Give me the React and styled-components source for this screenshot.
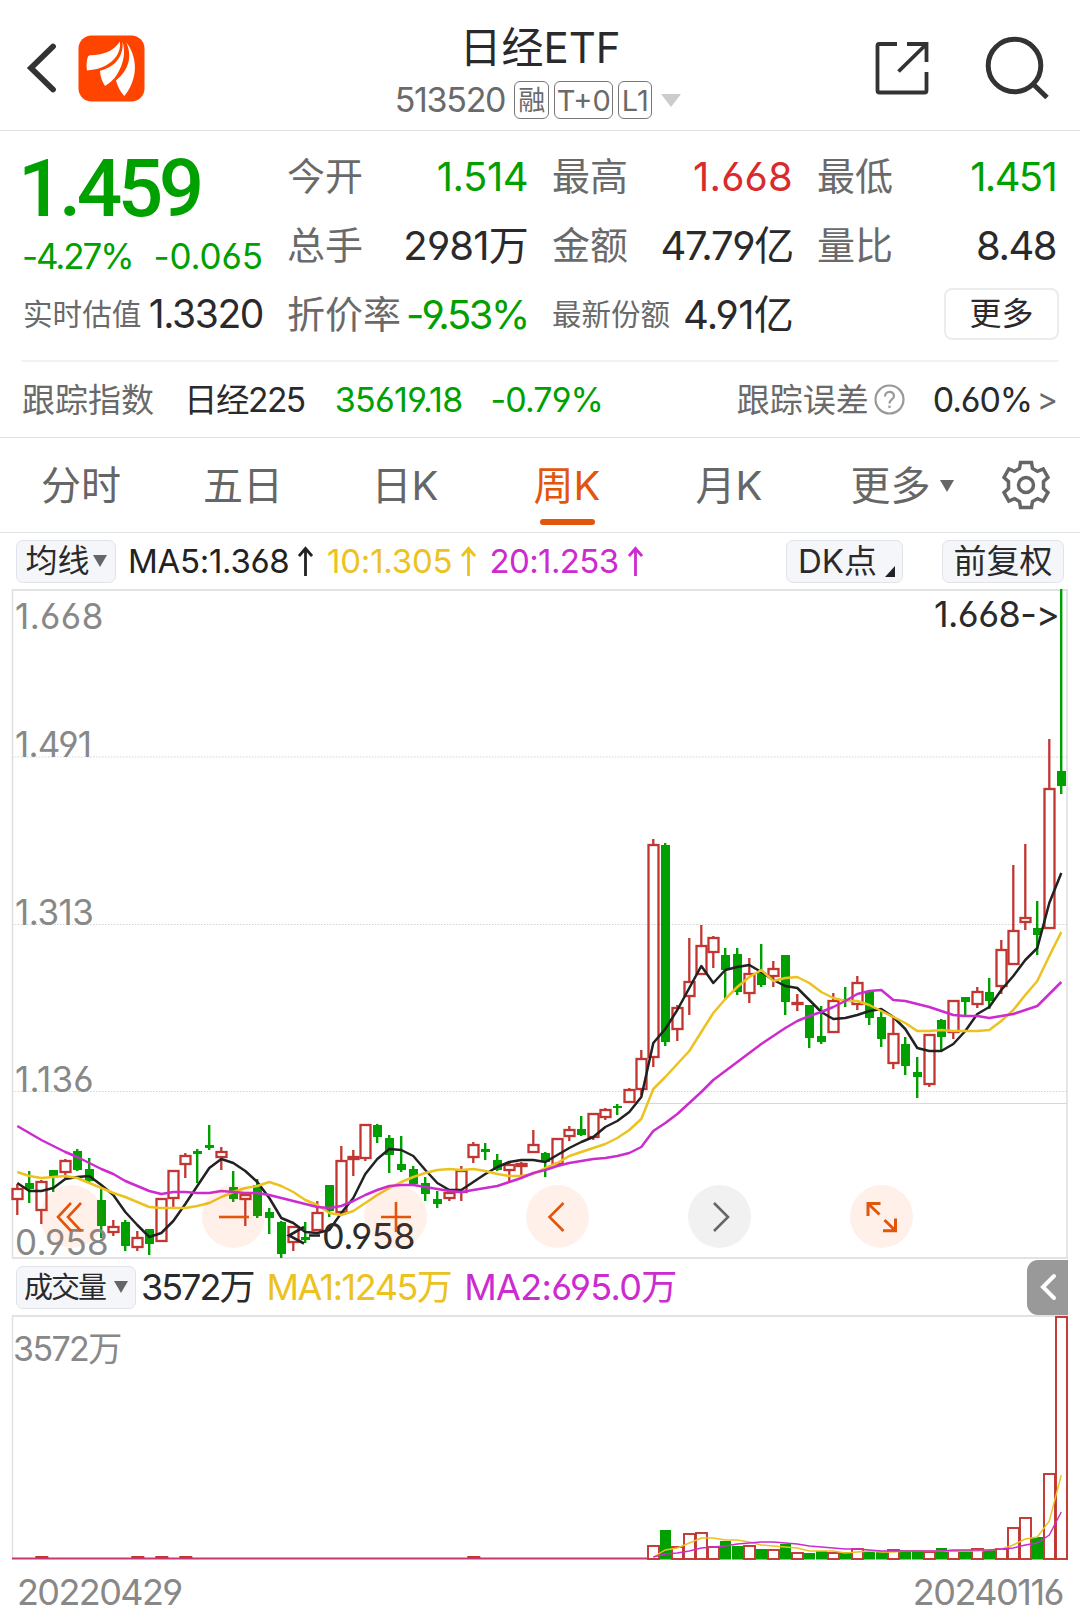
import { Fragment } from "react";
import styled, { createGlobalStyle } from "styled-components";

const RED = "#c23531";
const GREEN = "#00a000";
const YELLOW = "#ecc21f";
const PURPLE = "#cc2bd0";
const ORANGE = "#e2560c";

const GlobalStyle = createGlobalStyle`
  * {
    box-sizing: border-box;
  }
  body {
    margin: 0;
    background: #fff;
    font-family: Inter, "Noto Sans CJK SC", sans-serif;
    font-feature-settings: "cv03", "cv04";
    color: #2a2a2c;
  }
`;

const Page = styled.div`
  width: 1080px;
  height: 1605px;
  overflow: hidden;
  background: #fff;
`;

/* size, ls (letter spacing), color and weight change from text to text */
const Text = styled.span`
  display: block;
  white-space: nowrap;
  line-height: 1.2;
  font-size: ${(p) => p.$size || 34}px;
  letter-spacing: ${(p) => p.$ls || 0}px;
  color: ${(p) => p.$color || "#2a2a2c"};
  margin-left: ${(p) => p.$ml || 0}px;
`;

const Header = styled.header`
  display: grid;
  grid-template-columns: 1fr auto 1fr;
  height: 131px;
  border-bottom: 1px solid #dfe3e4;
`;
const HeaderLeft = styled.div`
  display: flex;
  align-items: flex-start;
  gap: 22px;
  padding: 35px 0 0 26px;
`;
const HeaderRight = styled.div`
  display: flex;
  justify-content: flex-end;
  gap: 55px;
  padding: 35px 30px 0 0;
`;
const TitleBox = styled.div`
  display: flex;
  flex-direction: column;
  align-items: center;
  padding-top: 23px;
`;
const CodeRow = styled.div`
  display: flex;
  align-items: center;
  gap: 5px;
  height: 38px;
  margin: 8px 0 0 -4px;
`;
const Code = styled(Text)`
  margin-right: 4px;
`;
const Tag = styled.span`
  display: flex;
  align-items: center;
  justify-content: center;
  width: ${(p) => p.$w}px;
  height: 38px;
  border: 1px solid #777;
  border-radius: 6px;
  color: #6a6a6a;
  font-size: ${(p) => p.$size || 29}px;
  letter-spacing: ${(p) => p.$ls || 0}px;
  line-height: 1;
`;
const Triangle = styled.i`
  display: block;
  width: 0;
  height: 0;
  border: ${(p) => p.$w / 2}px solid transparent;
  border-bottom: 0;
  border-top: ${(p) => p.$h}px solid ${(p) => p.$color || "#666"};
  margin-left: ${(p) => p.$ml || 0}px;
  margin-top: ${(p) => p.$mt || 0}px;
`;

const Quote = styled.section`
  display: grid;
  grid-template-columns: 240px 241px 241px 239px;
  column-gap: 24px;
  height: 229px;
  padding: 11px 0 0 23px;
`;
const QuoteCol = styled.div`
  display: grid;
  grid-template-rows: 69px 69px 69px;
`;
const QuoteCell = styled.div`
  display: flex;
  align-items: center;
  justify-content: space-between;
`;
const PriceCell = styled.div`
  grid-row: span 2;
  margin-top: -1px;
`;
const Price = styled.div`
  font: 500 80px/96px Roboto, sans-serif;
  letter-spacing: -4.5px;
  color: ${GREEN};
  margin-left: -5px;
`;
const PriceChange = styled.div`
  display: flex;
  justify-content: space-between;
  margin: -2px 0 0 -1px;
`;
const MoreButton = styled.button`
  width: 115px;
  height: 52px;
  margin: -2px -3px 0 auto;
  padding: 0 0 5px;
  border: 2px solid #ececf0;
  border-radius: 8px;
  background: #fff;
  color: #2a2a2c;
  font: 400 32px/1 "Noto Sans CJK SC", sans-serif;
`;

const IndexRow = styled.section`
  display: flex;
  align-items: center;
  height: 77px;
  margin: 0 22px;
  padding-top: 2px;
  border-top: 2px solid #f1f1f3;
`;
const Spacer = styled.span`
  flex: ${(p) => (p.$w ? `0 0 ${p.$w}px` : 1)};
`;

const Tabs = styled.nav`
  display: flex;
  align-items: stretch;
  height: 96px;
  border-top: 1px solid #dfe3e4;
  border-bottom: 1px solid #dfe3e4;
`;
const Tab = styled.div`
  display: flex;
  align-items: center;
  justify-content: center;
  width: ${(p) => p.$w || 162}px;
  position: relative;
  font-size: 40px;
  color: ${(p) => (p.$active ? ORANGE : "#666")};
  padding-bottom: ${(p) => p.$pb || 4}px;

  &::after {
    content: "";
    display: ${(p) => (p.$active ? "block" : "none")};
    position: absolute;
    bottom: 7px;
    width: 55px;
    height: 6px;
    border-radius: 3px;
    background: ${ORANGE};
  }
`;

const IndicatorBar = styled.div`
  display: flex;
  align-items: center;
  height: 56px;
  padding: 0 ${(p) => p.$pr}px 0 16px;

  > ${Text} {
    padding-top: 2px;
  }
`;
const Pill = styled.div`
  display: flex;
  align-items: center;
  justify-content: center;
  width: ${(p) => p.$w}px;
  height: 43px;
  border: 1px solid #e1e3e8;
  border-radius: 7px;
  background: #f5f6f9;
  font-size: ${(p) => p.$size || 33}px;
  letter-spacing: ${(p) => p.$ls || 0}px;
  line-height: 1;
  margin-left: ${(p) => p.$ml || 0}px;
`;
const Corner = styled.i`
  width: 0;
  height: 0;
  border-left: 10px solid transparent;
  border-bottom: 11px solid #222;
  margin: 20px -4px 0 8px;
`;
const SideToggle = styled.div`
  display: flex;
  align-items: center;
  justify-content: center;
  width: 41px;
  height: 55px;
  border-radius: 11px 0 0 11px;
  background: #999;
`;

const ChartBox = styled.div`
  position: relative;
  height: ${(p) => p.$h}px;

  > svg {
    display: block;
  }
`;
const AxisLabel = styled(Text)`
  position: absolute;
  left: ${(p) => p.$x}px;
  top: ${(p) => p.$y}px;
  transform: translateY(-50%);
  font-variant-ligatures: no-contextual;
`;
const Controls = styled.div`
  position: absolute;
  left: 40px;
  top: 596px;
  display: flex;
  gap: 99px;
`;
const RoundButton = styled.div`
  display: flex;
  align-items: center;
  justify-content: center;
  width: 63px;
  height: 63px;
  border-radius: 50%;
  background: ${(p) => (p.$off ? "rgba(0,0,0,.055)" : "rgba(255,90,10,.09)")};
`;
const Dates = styled.div`
  display: flex;
  justify-content: space-between;
  padding: 12px 17px 0 17px;
`;
const DateText = styled(Text)`
  font-size: 36px;
  line-height: 40px;
  color: #888;
`;

/* [up, high, body top, body bottom, low] */
const candles = [
  [1, 1184, 1188, 1200, 1215], [0, 1171, 1183, 1189, 1203], [1, 1180, 1181, 1211, 1224],
  [0, 1170, 1170, 1177, 1192], [1, 1159, 1160, 1173, 1178], [0, 1149, 1151, 1170, 1171],
  [0, 1158, 1169, 1181, 1183], [0, 1189, 1200, 1226, 1238], [1, 1220, 1226, 1233, 1236],
  [0, 1220, 1222, 1246, 1251], [1, 1231, 1237, 1248, 1251], [0, 1229, 1229, 1244, 1255],
  [1, 1198, 1198, 1242, 1242], [1, 1170, 1170, 1199, 1207], [1, 1153, 1155, 1165, 1178],
  [0, 1149, 1151, 1154, 1183], [0, 1125, 1145, 1148, 1150], [1, 1147, 1151, 1158, 1170],
  [0, 1171, 1187, 1199, 1202], [1, 1192, 1194, 1200, 1226], [0, 1179, 1185, 1216, 1218],
  [0, 1208, 1212, 1218, 1234], [0, 1221, 1222, 1254, 1258], [1, 1226, 1226, 1243, 1251],
  [0, 1222, 1237, 1240, 1243], [1, 1201, 1212, 1231, 1231], [0, 1185, 1185, 1211, 1217],
  [1, 1146, 1160, 1213, 1213], [1, 1150, 1156, 1160, 1176], [1, 1124, 1124, 1159, 1161],
  [0, 1124, 1125, 1137, 1143], [0, 1135, 1138, 1155, 1173], [0, 1136, 1164, 1170, 1172],
  [0, 1166, 1169, 1184, 1185], [0, 1177, 1183, 1194, 1201], [0, 1191, 1199, 1204, 1208],
  [1, 1191, 1192, 1199, 1201], [1, 1166, 1170, 1193, 1201], [1, 1142, 1144, 1158, 1163],
  [0, 1143, 1149, 1152, 1160], [0, 1154, 1160, 1170, 1171], [1, 1163, 1164, 1171, 1183],
  [1, 1162, 1163, 1167, 1177], [1, 1130, 1144, 1153, 1153], [0, 1152, 1153, 1162, 1177],
  [1, 1138, 1138, 1165, 1165], [1, 1126, 1129, 1137, 1141], [0, 1116, 1129, 1135, 1136],
  [1, 1113, 1113, 1138, 1140], [1, 1108, 1109, 1118, 1120], [0, 1104, 1106, 1108, 1115],
  [1, 1088, 1089, 1103, 1103], [1, 1050, 1058, 1090, 1095], [1, 839, 844, 1058, 1067],
  [0, 843, 845, 1042, 1046], [1, 1005, 1007, 1030, 1041], [1, 938, 981, 997, 1015],
  [1, 925, 945, 975, 975], [1, 936, 937, 953, 968], [0, 948, 955, 970, 999],
  [0, 948, 954, 992, 995], [1, 958, 973, 994, 1003], [0, 944, 972, 985, 987],
  [1, 961, 968, 977, 987], [0, 955, 955, 1002, 1015], [1, 994, 1002, 1005, 1011],
  [0, 1005, 1005, 1038, 1048], [0, 1006, 1036, 1042, 1044], [1, 993, 1000, 1033, 1033],
  [0, 987, 999, 1001, 1007], [1, 976, 982, 1005, 1010], [0, 991, 991, 1018, 1025],
  [0, 1010, 1017, 1039, 1047], [1, 1017, 1033, 1064, 1069], [0, 1037, 1044, 1066, 1075],
  [0, 1057, 1072, 1077, 1098], [1, 1034, 1034, 1085, 1087], [0, 1019, 1020, 1037, 1051],
  [1, 1000, 1000, 1033, 1039], [0, 997, 997, 1002, 1016], [1, 987, 991, 1005, 1008],
  [0, 978, 992, 1001, 1009], [1, 940, 949, 987, 994], [1, 865, 930, 965, 965],
  [1, 844, 917, 923, 930], [0, 901, 928, 935, 955], [1, 739, 788, 929, 929],
  [0, 589, 771, 786, 794],
];
const ma5 = [
  1183, 1191, 1191, 1188, 1179, 1177, 1176, 1185, 1195, 1212, 1225, 1237, 1233, 1221, 1204, 1186,
  1168, 1159, 1163, 1171, 1182, 1198, 1218, 1223, 1232, 1233, 1230, 1213, 1198, 1174, 1159, 1149,
  1150, 1156, 1170, 1183, 1190, 1190, 1182, 1174, 1167, 1162, 1160, 1160, 1162, 1155, 1148, 1142,
  1137, 1127, 1121, 1112, 1097, 1043, 1029, 1010, 988, 966, 983, 970, 967, 965, 972, 980, 986, 988,
  1000, 1012, 1019, 1018, 1015, 1011, 1009, 1017, 1029, 1048, 1051, 1051, 1044, 1031, 1014, 1007,
  990, 976, 960, 948, 903, 873,
];
const ma10 = [
  1172, 1176, 1178, 1177, 1176, 1178, 1183, 1188, 1193, 1197, 1202, 1207, 1208, 1208, 1208, 1206,
  1203, 1197, 1192, 1188, 1186, 1182, 1186, 1192, 1200, 1205, 1213, 1215, 1211, 1203, 1195, 1188,
  1182, 1177, 1173, 1170, 1169, 1170, 1169, 1171, 1174, 1176, 1176, 1174, 1168, 1163, 1156, 1152,
  1148, 1144, 1138, 1130, 1119, 1089, 1077, 1064, 1051, 1032, 1013, 999, 987, 977, 970, 981, 978,
  977, 983, 992, 998, 1001, 1001, 1005, 1011, 1017, 1023, 1031, 1031, 1030, 1031, 1031, 1031, 1030,
  1021, 1010, 995, 981, 956, 932,
];
const ma20 = [
  1126, 1133, 1140, 1146, 1152, 1157, 1163, 1169, 1174, 1181, 1186, 1191, 1194, 1192, 1192, 1193,
  1193, 1191, 1192, 1193, 1193, 1195, 1198, 1201, 1204, 1207, 1208, 1206, 1201, 1195, 1190, 1186,
  1185, 1185, 1187, 1189, 1191, 1192, 1190, 1188, 1186, 1182, 1178, 1173, 1170, 1166, 1163, 1161,
  1159, 1158, 1156, 1153, 1147, 1131, 1123, 1114, 1103, 1092, 1080, 1071, 1062, 1053, 1044, 1036,
  1028, 1021, 1016, 1012, 1007, 1001, 994, 991, 990, 1000, 1001, 1004, 1007, 1011, 1015, 1016, 1016,
  1018, 1016, 1014, 1010, 1006, 994, 982,
];

/* volume: trading was almost flat before VOL_START */
const VOL_START = 53;
const volumeTops = [
  1545, 1530, 1546, 1533, 1532, 1546, 1541, 1546, 1545, 1549, 1549, 1544, 1552, 1553, 1551, 1552,
  1552, 1548, 1552, 1552, 1549, 1550, 1550, 1551, 1548, 1550, 1550, 1548, 1550, 1548, 1527, 1517,
  1537, 1473, 1316,
];
const flatVolume = [2, 10, 12, 14, 38];
const volMa1 = [
  1557, 1550, 1548, 1543, 1538, 1538, 1540, 1540, 1542, 1545, 1546, 1547, 1548, 1551, 1551, 1551,
  1553, 1552, 1551, 1552, 1552, 1551, 1551, 1551, 1551, 1551, 1551, 1551, 1550, 1549, 1545, 1539,
  1537, 1521, 1475,
];
const volMa2 = [
  1557, 1554, 1553, 1551, 1548, 1547, 1546, 1544, 1543, 1542, 1542, 1543, 1544, 1546, 1547, 1548,
  1549, 1549, 1550, 1551, 1551, 1551, 1551, 1551, 1551, 1550, 1550, 1550, 1550, 1549, 1548, 1545,
  1543, 1535, 1512,
];

const xOf = (i) => 17.3 + i * 12;
const toLine = (list, from = 0) =>
  list.map((y, i) => `${xOf(i + from).toFixed(1)},${y}`).join(" ");

const Candle = ({ i, data }) => {
  const [up, high, top, bottom, low] = data;
  const x = Math.round(xOf(i));
  if (up) {
    return (
      <g stroke={RED} strokeWidth="2.3" fill="none">
        <path d={`M${x + 0.3} ${high}V${top}M${x + 0.3} ${bottom}V${low}`} />
        <rect x={x - 4.5} y={top + 1} width="10" height={Math.max(bottom - top - 2, 1)} />
      </g>
    );
  }
  return (
    <g fill={GREEN}>
      <rect x={x - 1} y={high} width="2.4" height={low - high} />
      <rect x={x - 4} y={top} width="9" height={bottom - top} />
    </g>
  );
};

const KLineChart = () => (
  <svg width="1080" height="670" viewBox="0 589 1080 670" fill="none">
    <path d="M12.5 589V1258M1067 589V1258" stroke="#e0e0e0" strokeWidth="1.6" />
    <path d="M12 590H1068M12 1258H1068" stroke="#e2e2e2" strokeWidth="2" />
    <path d="M12 757H1067M12 924.5H1067M12 1091.5H1067" stroke="#d4d4d4" strokeDasharray="1.5 1.5" />
    <path d="M636 1103.5H1067" stroke="#d8d8d8" />
    {candles.map((c, i) => (
      <Candle key={i} i={i} data={c} />
    ))}
    <g strokeWidth="2.5" strokeLinejoin="round">
      <polyline points={toLine(ma5)} stroke="#222" />
      <polyline points={toLine(ma10)} stroke={YELLOW} />
      <polyline points={toLine(ma20)} stroke={PURPLE} />
    </g>
    <path d="M304 1227L289 1235.5L304 1243.5M309 1235.5H320" stroke="#222" strokeWidth="2.6" />
  </svg>
);

const VolumeChart = () => (
  <svg width="1080" height="245" viewBox="0 1315 1080 245" fill="none">
    <path d="M12.5 1315V1559M1067 1315V1559" stroke="#e0e0e0" strokeWidth="1.4" />
    <path d="M12 1316H1068" stroke="#e2e2e2" strokeWidth="2" />
    {flatVolume.map((i) => (
      <rect key={i} x={xOf(i) - 6} y="1556" width="13" height="2" fill={RED} />
    ))}
    {volumeTops.map((top, n) => {
      const i = n + VOL_START;
      const x = Math.round(xOf(i));
      const up = candles[i][0] || i === candles.length - 1;
      return up ? (
        <rect key={i} x={x - 5} y={top + 1} width="11" height={1558 - top} stroke={RED} strokeWidth="1.9" />
      ) : (
        <rect key={i} x={x - 5} y={top} width="11" height={1559.5 - top} fill={GREEN} />
      );
    })}
    <path d="M12 1558.5H648" stroke="#c4396f" strokeWidth="2" />
    <g strokeWidth="1.4">
      <polyline points={toLine(volMa1, VOL_START)} stroke={YELLOW} />
      <polyline points={toLine(volMa2, VOL_START)} stroke={PURPLE} />
    </g>
  </svg>
);

const BackIcon = () => (
  <svg width="30" height="66" viewBox="0 0 30 66" fill="none">
    <path d="M27 11.5L5 33L27 54.5" stroke="#333" strokeWidth="5.8" strokeLinecap="round" />
  </svg>
);
const Logo = () => (
  <svg width="67" height="67" viewBox="0 0 67 67">
    <rect x="0.5" y="0.5" width="66" height="66" rx="13" fill="#ff4400" />
    <g fill="#fff">
      <path d="M42 6.5C35 17 24 20 12 20.3Q10 20.3 9.5 23Q8 28 9 35.5Q20 34.5 27 31C37 25.5 43 18 42 6.5Z" />
      <path d="M44.5 6.5C46 20 38 32 21.9 35.7Q22.5 44 27 51Q35 46 39 39.5C45.5 29 48 17 44.5 6.5Z" />
      <path d="M48.2 7.2C54 20 52 34 38 45.5Q40.5 55 46.3 61Q53 53 55.5 43C59 31 56 17 48.2 7.2Z" />
    </g>
  </svg>
);
const ShareIcon = () => (
  <svg width="54" height="66" viewBox="875 35 54 66" fill="none" stroke="#333" strokeWidth="3.8">
    <path d="M897 44H879Q877.5 44 877.5 46V90.5Q877.5 92.5 879.5 92.5H924.5Q926.5 92.5 926.5 90.5V72" />
    <path d="M907 44H926.5V62M926 44.5L898.5 71.5" />
  </svg>
);
const SearchIcon = () => (
  <svg width="66" height="66" viewBox="984 35 66 66" fill="none" stroke="#333" strokeWidth="5">
    <circle cx="1014.5" cy="65.5" r="26.3" />
    <path d="M1033 84L1047 97.5" />
  </svg>
);
const HelpSvg = styled.svg`
  margin: -2px 0 0 5px;
`;
const HelpIcon = () => (
  <HelpSvg width="31" height="31" viewBox="0 0 31 31" fill="none" stroke="#999" strokeWidth="2.2">
    <circle cx="15.5" cy="15.5" r="14" />
    <path d="M11 12.5C11 6.5 20 6.5 20 12C20 15.5 15.5 15.5 15.5 19.5M15.5 21.5V24" />
  </HelpSvg>
);
const GearIcon = () => (
  <svg width="48" height="50" viewBox="-24 -25 48 50" fill="none" stroke="#666" strokeWidth="3.5">
    <path d="M-5.5 -22.5H5.5L6.5 -16.5L11.5 -13.6L17.2 -16L22 -7.5L17.5 -3.5V3.5L22 7.5L17.2 16L11.5 13.6L6.5 16.5L5.5 22.5H-5.5L-6.5 16.5L-11.5 13.6L-17.2 16L-22 7.5L-17.5 3.5V-3.5L-22 -7.5L-17.2 -16L-11.5 -13.6L-6.5 -16.5Z" />
    <circle r="7.5" />
  </svg>
);
const ArrowUp = ({ color }) => (
  <svg width="15" height="30" viewBox="0 0 15 30" fill="none" stroke={color} strokeWidth="2.8">
    <path d="M7.5 30V2.5M1 10L7.5 2.5L14 10" />
  </svg>
);
const controlPaths = [
  "M22 -14L9 0L22 14M12 -14L-1 0L12 14",
  "M-2 0H28",
  "M-2 0H28M13 -15V15",
  "M18.5 -14L4.5 0L18.5 14",
  "M7 -14L21 0L7 14",
  "M-1 -1V-13.5H11.5M-1 -13.5L10.5 -2.5M26.5 1.5V13.8H14M26.5 13.8L15.5 3",
];

/* label, value, color, letter spacing */
const stats = [
  [
    ["今开", "1.514", GREEN, -0.5],
    ["总手", "2981万", null, -0.8],
    ["折价率", "-9.53%", GREEN, -2.4],
  ],
  [
    ["最高", "1.668", "#d92b2b", 0.2],
    ["金额", "47.79亿", null, -1.3],
    ["最新份额", "4.91亿", null, -0.7],
  ],
  [
    ["最低", "1.451", GREEN, -1.7],
    ["量比", "8.48", null, -1.5],
  ],
];
const mas = [
  ["MA5:1.368", "#222", 12, -0.3],
  ["10:1.305", YELLOW, 13.5, -0.2],
  ["20:1.253", PURPLE, 13, -0.6],
];
const priceLabels = [
  ["1.668", 27, 0.4],
  ["1.491", 155, -0.8],
  ["1.313", 323, -0.5],
  ["1.136", 490, 0.3],
  ["0.958", 653, 0.2],
];

const App = () => {
  return (
    <Page>
      <GlobalStyle />
      <Header>
        <HeaderLeft>
          <BackIcon />
          <Logo />
        </HeaderLeft>
        <TitleBox>
          <Text $size={42}>日经ETF</Text>
          <CodeRow>
            <Code $size={34} $ls={-1.3} $color="#6a6a6a">513520</Code>
            <Tag $w={35} $size={27}>融</Tag>
            <Tag $w={59}>T+0</Tag>
            <Tag $w={34}>L1</Tag>
            <Triangle $w={20} $h={13} $color="#ccc" $ml={4} />
          </CodeRow>
        </TitleBox>
        <HeaderRight>
          <ShareIcon />
          <SearchIcon />
        </HeaderRight>
      </Header>

      <Quote>
        <QuoteCol>
          <PriceCell>
            <Price>1.459</Price>
            <PriceChange>
              <Text $size={35} $ls={-2.1} $color={GREEN}>-4.27%</Text>
              <Text $size={35} $ls={-0.1} $color={GREEN}>-0.065</Text>
            </PriceChange>
          </PriceCell>
          <QuoteCell>
            <Text $size={29.6} $color="#6a6a6a">实时估值</Text>
            <Text $size={39} $ls={-1.4}>1.3320</Text>
          </QuoteCell>
        </QuoteCol>
        {stats.map((col, i) => (
          <QuoteCol key={i}>
            {col.map(([label, value, color, ls]) => (
              <QuoteCell key={label}>
                <Text $size={label.length > 3 ? 29.5 : 38} $color="#6a6a6a">{label}</Text>
                <Text $size={40} $ls={ls} $color={color}>{value}</Text>
              </QuoteCell>
            ))}
            {col.length === 2 && (
              <QuoteCell>
                <MoreButton>更多</MoreButton>
              </QuoteCell>
            )}
          </QuoteCol>
        ))}
      </Quote>

      <IndexRow>
        <Text $size={33} $color="#6a6a6a">跟踪指数</Text>
        <Text $size={33.5} $ls={-1.5} $ml={30}>日经225</Text>
        <Text $size={34} $ls={-0.7} $color={GREEN} $ml={30}>35619.18</Text>
        <Text $size={34} $ls={-0.9} $color={GREEN} $ml={28}>-0.79%</Text>
        <Spacer />
        <Text $size={33} $color="#6a6a6a">跟踪误差</Text>
        <HelpIcon />
        <Text $size={34} $ls={-1.2} $ml={28}>0.60%</Text>
        <Text $size={32} $color="#6a6a6a" $ml={5}>&gt;</Text>
      </IndexRow>

      <Tabs>
        <Tab>分时</Tab>
        <Tab>五日</Tab>
        <Tab>日K</Tab>
        <Tab $active>周K</Tab>
        <Tab>月K</Tab>
        <Tab $w={184}>
          更多
          <Triangle $w={14} $h={12} $ml={9} $mt={5} />
        </Tab>
        <Tab $w={64} $pb={1}>
          <GearIcon />
        </Tab>
      </Tabs>

      <IndicatorBar $pr={16}>
        <Pill $w={100} $size={32}>
          均线
          <Triangle $w={14} $h={12} $ml={3} />
        </Pill>
        {mas.map(([label, color, ml, ls]) => (
          <Fragment key={label}>
            <Text $size={33} $color={color} $ml={ml} $ls={ls}>{label}</Text>
            <Spacer $w={9} />
            <ArrowUp color={color} />
          </Fragment>
        ))}
        <Spacer />
        <Pill $w={117}>
          DK点
          <Corner />
        </Pill>
        <Pill $w={122} $ml={39}>前复权</Pill>
      </IndicatorBar>

      <ChartBox $h={670}>
        <KLineChart />
        {priceLabels.map(([label, y, ls]) => (
          <AxisLabel key={label} $x={15} $y={y} $size={35} $ls={ls} $color="#888">{label}</AxisLabel>
        ))}
        <AxisLabel $x={934} $y={26} $size={36} $ls={-0.6}>1.668-&gt;</AxisLabel>
        <AxisLabel $x={322} $y={648} $size={36} $ls={-0.5}>0.958</AxisLabel>
        <Controls>
          {controlPaths.map((d, i) => (
            <RoundButton key={i} $off={i === 4}>
              <svg width="34" height="34" viewBox="-4 -17 34 34" fill="none">
                <path d={d} stroke={i === 4 ? "#666" : ORANGE} strokeWidth={i === 5 ? 3 : 2.6} />
              </svg>
            </RoundButton>
          ))}
        </Controls>
      </ChartBox>

      <IndicatorBar $pr={12}>
        <Pill $w={120} $size={29} $ls={-2}>
          成交量
          <Triangle $w={14} $h={12} $ml={9} />
        </Pill>
        <Text $size={36} $ls={-2} $ml={5}>3572万</Text>
        <Text $size={36} $ls={-1.5} $color={YELLOW} $ml={13}>MA1:1245万</Text>
        <Text $size={36} $ls={-0.7} $color={PURPLE} $ml={13}>MA2:695.0万</Text>
        <Spacer />
        <SideToggle>
          <svg width="18" height="30" viewBox="0 0 18 30" fill="none">
            <path d="M15 4L4 15L15 26" stroke="#fff" strokeWidth="4" strokeLinecap="round" />
          </svg>
        </SideToggle>
      </IndicatorBar>

      <ChartBox $h={245}>
        <VolumeChart />
        <AxisLabel $x={13} $y={34} $size={34} $ls={-1.6} $color="#888">3572万</AxisLabel>
      </ChartBox>
      <Dates>
        <DateText $ls={-1.6}>20220429</DateText>
        <DateText $ls={-1.5}>20240116</DateText>
      </Dates>
    </Page>
  );
};

export default App;
